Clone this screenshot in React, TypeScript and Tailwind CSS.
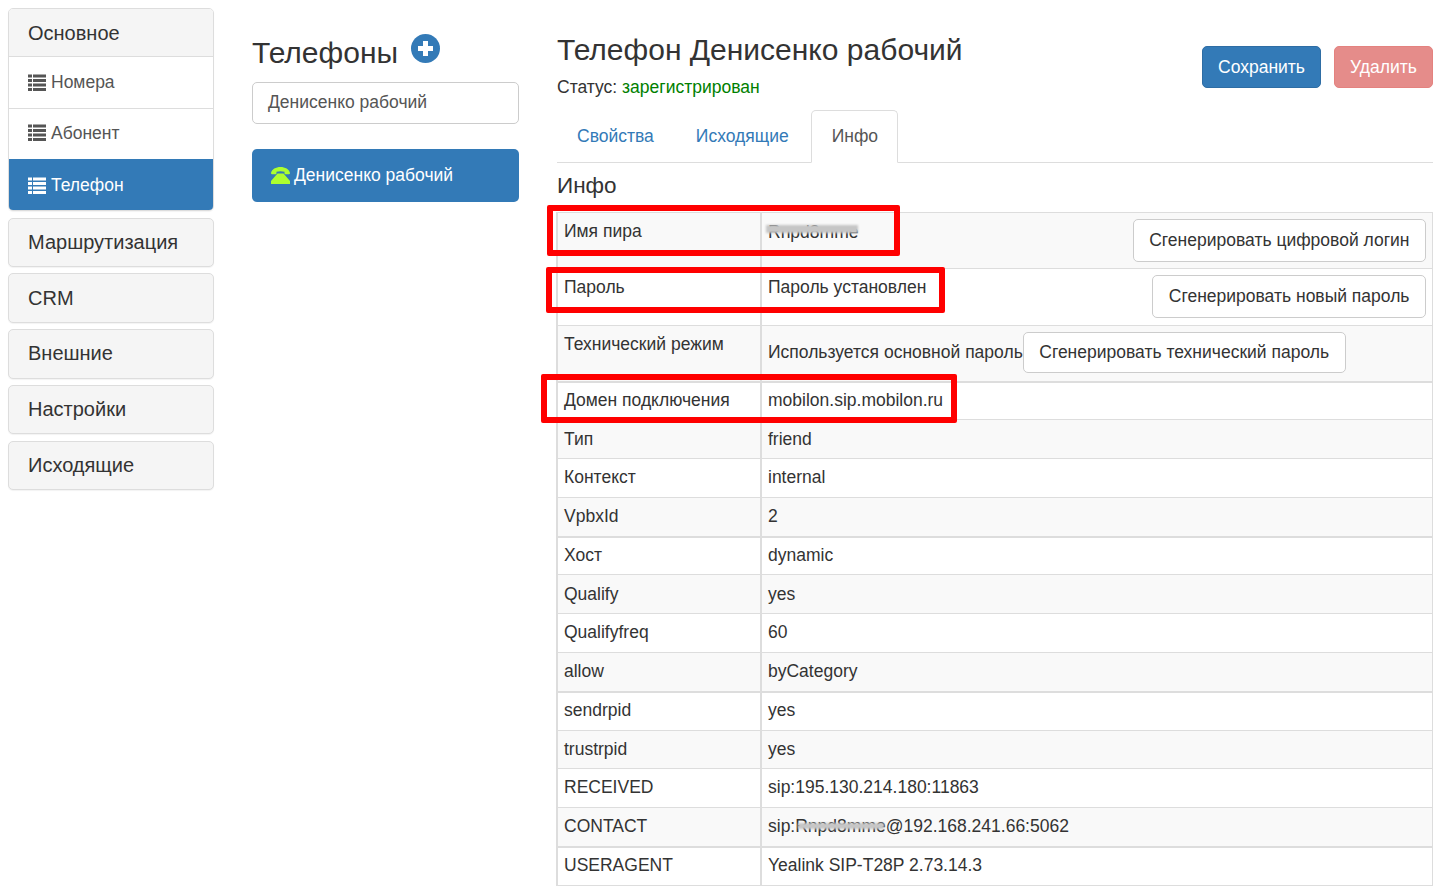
import type { ReactNode } from "react";

const ListIcon = () => (
  <svg width="18" height="18" viewBox="0 0 18 18" className="shrink-0 fill-current">
    <rect x="0" y="0.500" width="4" height="3" />
    <rect x="5" y="0.500" width="13" height="3" />
    <rect x="0" y="5" width="4" height="3" />
    <rect x="5" y="5" width="13" height="3" />
    <rect x="0" y="9.500" width="4" height="3" />
    <rect x="5" y="9.500" width="13" height="3" />
    <rect x="0" y="14" width="4" height="3" />
    <rect x="5" y="14" width="13" height="3" />
  </svg>
);

const PhoneAlt = () => (
  <svg width="19" height="17" viewBox="0 0 19 17" className="shrink-0">
    <path
      fill="#adff2f"
      d="M0 6C.6 2.200 5 0 9.500 0S18.400 2.200 19 6c0 .8-.4 1.200-1 1.200h-3.500c-.6 0-1-.4-1-1V4.800c-1.200-.4-2.600-.6-4-.6s-2.800.2-4 .6v1.400c0 .6-.4 1-1 1H1C.4 7.200 0 6.800 0 6zM6.500 6.500h6L19 14v3H0v-3z"
    />
  </svg>
);

const Blurred = ({ children, className }: { children: string; className: string }) => (
  <span className="relative inline-block">
    {children}
    <span className={`absolute bg-[#c6c6c6] blur-[1px] ${className}`}></span>
  </span>
);

const MenuHead = ({ title }: { title: string }) => (
  <div className="h-[49.500px] bg-[#f5f5f5] border border-[#ddd] rounded-[5px] shadow-[0_1px_1px_rgba(0,0,0,0.05)] pl-[19px] pb-[1px] flex items-center text-[20px] text-[#333]">
    {title}
  </div>
);

const rows: { name: string; value: ReactNode; h: string; bg: string; thick?: boolean; up?: boolean }[] = [
  { name: "Тип", value: "friend", h: "h-[39px]", bg: "bg-[#f9f9f9]" },
  { name: "Контекст", value: "internal", h: "h-[39px]", bg: "bg-white", up: true },
  { name: "VpbxId", value: "2", h: "h-[39px]", bg: "bg-[#f9f9f9]", up: true },
  { name: "Хост", value: "dynamic", h: "h-[38px]", bg: "bg-white", thick: true, up: true },
  { name: "Qualify", value: "yes", h: "h-[39px]", bg: "bg-[#f9f9f9]" },
  { name: "Qualifyfreq", value: "60", h: "h-[39px]", bg: "bg-white", up: true },
  { name: "allow", value: "byCategory", h: "h-[39px]", bg: "bg-[#f9f9f9]", up: true },
  { name: "sendrpid", value: "yes", h: "h-[39px]", bg: "bg-white", thick: true, up: true },
  { name: "trustrpid", value: "yes", h: "h-[38px]", bg: "bg-[#f9f9f9]" },
  { name: "RECEIVED", value: "sip:195.130.214.180:11863", h: "h-[39px]", bg: "bg-white", up: true },
  {
    name: "CONTACT",
    value: (
      <>
        sip:
        <Blurred className="left-[3px] right-[2px] top-[10px] h-[6px]">Rnpd8mme</Blurred>
        @192.168.241.66:5062
      </>
    ),
    h: "h-[39px]",
    bg: "bg-[#f9f9f9]",
    up: true,
  },
  { name: "USERAGENT", value: "Yealink SIP-T28P 2.73.14.3", h: "h-[39px]", bg: "bg-white", thick: true, up: true },
];

const OutlineButton = ({ children, className = "h-[43px]" }: { children: string; className?: string }) => (
  <button
    className={`${className} px-[15.500px] bg-white border border-[#ccc] rounded-[5px] text-[17.500px] text-[#333] whitespace-nowrap`}
  >
    {children}
  </button>
);

export default function App() {
  return (
    <div
      className="w-[1444px] h-[893px] overflow-hidden bg-white flex text-[17.500px] text-[#333]"
      style={{ fontFamily: '"Liberation Sans", Arial, sans-serif' }}
    >
      <aside className="w-[206px] ml-2 mt-2 shrink-0 flex flex-col">
        <div className="border border-[#ddd] rounded-[5px] overflow-hidden shadow-[0_1px_1px_rgba(0,0,0,0.05)]">
          <div className="h-[48px] bg-[#f5f5f5] border-b border-[#ddd] pl-[19px] flex items-center text-[20px]">
            Основное
          </div>
          <div className="h-[52px] border-b border-[#ddd] pl-[19px] flex items-center gap-[5px] text-[#555]">
            <ListIcon />
            Номера
          </div>
          <div className="h-[50px] pl-[19px] pb-[2px] flex items-center gap-[5px] text-[#555]">
            <ListIcon />
            Абонент
          </div>
          <div className="h-[51px] bg-[#337ab7] pl-[19px] pt-[2px] flex items-center gap-[5px] text-white">
            <ListIcon />
            Телефон
          </div>
        </div>
        <div className="mt-[6.500px] flex flex-col gap-[6.250px]">
          {["Маршрутизация", "CRM", "Внешние", "Настройки", "Исходящие"].map((t) => (
            <MenuHead key={t} title={t} />
          ))}
        </div>
      </aside>

      <section className="w-[267px] ml-[38px] shrink-0 flex flex-col">
        <div className="mt-[34px] flex items-start h-[48px]">
          <h2 className="text-[30px] leading-[36px] mt-[1px]">Телефоны</h2>
          <svg width="29" height="29" viewBox="0 0 29 29" className="ml-[13px]">
            <circle cx="14.500" cy="14.500" r="14.500" fill="#337ab7" />
            <path d="M12 7h5v5h5v5h-5v5h-5v-5H7v-5h5z" fill="#fff" />
          </svg>
        </div>
        <div className="h-[42px] border border-[#ccc] rounded-[5px] pl-[15px] pb-[2px] flex items-center text-[#555]">
          Денисенко рабочий
        </div>
        <div className="mt-[25px] h-[53px] bg-[#337ab7] rounded-[5px] pl-[19px] flex items-center gap-[4px] text-white">
          <PhoneAlt />
          Денисенко рабочий
        </div>
      </section>

      <main className="w-[876px] ml-[38px] shrink-0">
        <div className="flex justify-between h-[110px]">
          <div>
            <h1 className="mt-[32px] text-[30px] leading-[36px]">Телефон Денисенко рабочий</h1>
            <p className="mt-[6px] leading-[26px]">
              Статус: <span className="text-[#008000]">зарегистрирован</span>
            </p>
          </div>
          <div className="flex gap-[13px] mt-[46px] h-[42px]">
            <button className="w-[119px] bg-[#337ab7] border border-[#2e6da4] rounded-[5px] text-white">
              Сохранить
            </button>
            <button className="w-[99px] bg-[#e58c8a] border border-[#e4827f] rounded-[5px] text-white">
              Удалить
            </button>
          </div>
        </div>

        <div className="flex h-[53px] border-b border-[#ddd] pl-5 text-[#337ab7]">
          <div className="pt-[13px]">Свойства</div>
          <div className="pt-[13px] ml-[42px]">Исходящие</div>
          <div className="ml-[22px] h-[53px] w-[87px] border border-[#ddd] border-b-white rounded-t-[5px] bg-white text-[#555] pl-5 pt-[12px]">
            Инфо
          </div>
        </div>

        <h3 className="mt-[8px] text-[22.500px] leading-[30px]">Инфо</h3>

        <div className="relative mt-[11px]">
          <table className="w-[877px] -ml-px table-fixed border-collapse">
            <colgroup>
              <col className="w-[204px]" />
              <col />
            </colgroup>
            <tbody>
              <tr className="h-[56px] bg-[#f9f9f9]">
                <td className="border border-[#ddd] border-l-2 border-r-2 px-[6px] align-top pt-[5px]">Имя пира</td>
                <td className="border border-[#ddd] px-[6px] align-top">
                  <div className="flex justify-between pt-[6px]">
                    <Blurred className="-left-[2px] right-0 top-[6px] h-[8px]">Rnpd8mme</Blurred>
                    <OutlineButton>Сгенерировать цифровой логин</OutlineButton>
                  </div>
                </td>
              </tr>
              <tr className="h-[57px]">
                <td className="border border-[#ddd] border-l-2 border-r-2 px-[6px] align-top pt-[5px]">Пароль</td>
                <td className="border border-[#ddd] px-[6px] align-top">
                  <div className="flex justify-between pt-[5px]">
                    <span>Пароль установлен</span>
                    <OutlineButton className="h-[43px] mt-px">Сгенерировать новый пароль</OutlineButton>
                  </div>
                </td>
              </tr>
              <tr className="h-[56px] bg-[#f9f9f9]">
                <td className="border border-[#ddd] border-l-2 border-r-2 border-b-2 px-[6px] align-top pt-[5px]">
                  Технический режим
                </td>
                <td className="border border-[#ddd] border-b-2 px-[6px] align-top">
                  <div className="flex items-center pt-[6px]">
                    <span>Используется основной пароль</span>
                    <OutlineButton className="h-[41px]">Сгенерировать технический пароль</OutlineButton>
                  </div>
                </td>
              </tr>
              <tr className="h-[38px]">
                <td className="border border-[#ddd] border-l-2 border-r-2 px-[6px] pb-[2px]">Домен подключения</td>
                <td className="border border-[#ddd] px-[6px] pb-[2px]">mobilon.sip.mobilon.ru</td>
              </tr>
              {rows.map((r) => (
                <tr key={r.name} className={`${r.h} ${r.bg}`}>
                  <td
                    className={`border border-[#ddd] border-l-2 border-r-2 px-[6px] ${r.thick ? "border-t-2" : ""} ${r.up ? "pb-[2px]" : ""}`}
                  >
                    {r.name}
                  </td>
                  <td className={`border border-[#ddd] px-[6px] ${r.thick ? "border-t-2" : ""} ${r.up ? "pb-[2px]" : ""}`}>
                    {r.value}
                  </td>
                </tr>
              ))}
            </tbody>
          </table>

          {/* красные рамки поверх таблицы */}
          <div className="absolute left-[-10px] top-[-7px] w-[353px] h-[51px] border-[6px] border-[#f00] rounded-[2px]"></div>
          <div className="absolute left-[-11px] top-[55px] w-[399px] h-[46px] border-[6px] border-[#f00] rounded-[2px]"></div>
          <div className="absolute left-[-16px] top-[162px] w-[416px] h-[49px] border-[6px] border-[#f00] rounded-[2px]"></div>
        </div>
      </main>
    </div>
  );
}
